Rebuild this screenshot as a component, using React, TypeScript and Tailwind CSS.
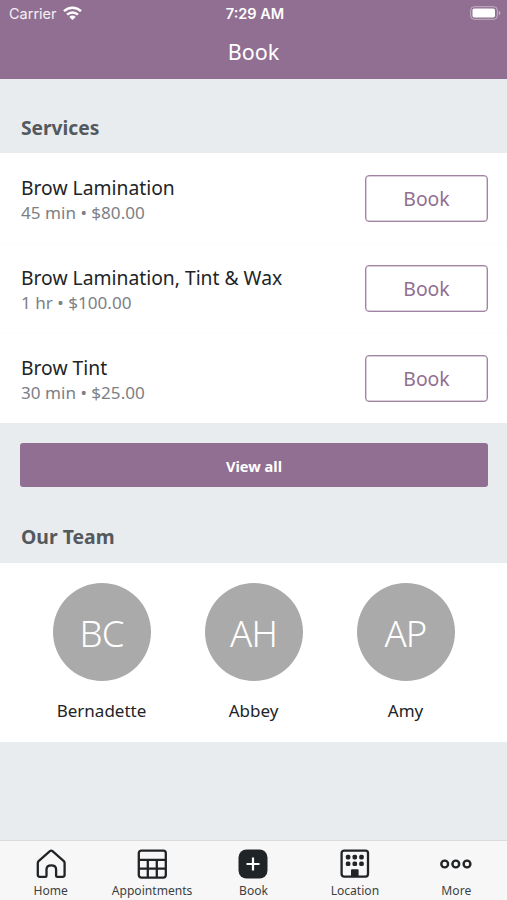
import type { ReactNode } from "react";

const services = [
  { name: "Brow Lamination", duration: "45 min", price: "$80.00" },
  { name: "Brow Lamination, Tint & Wax", duration: "1 hr", price: "$100.00" },
  { name: "Brow Tint", duration: "30 min", price: "$25.00" },
];

const team = [
  { name: "Bernadette", initials: "BC" },
  { name: "Abbey", initials: "AH" },
  { name: "Amy", initials: "AP" },
];

function HomeIcon() {
  return (
    <svg width="32" height="32" viewBox="0 0 32 32" fill="none" stroke="#212427" strokeWidth="2.3" strokeLinejoin="round" strokeLinecap="round">
      <path d="M2.8 15c0-.8.3-1.4.8-1.9L14.9 3.2c.8-.7 1.8-.7 2.6 0l11.3 9.9c.5.5.8 1.1.8 1.9v11.8c0 1.2-.8 2-2 2h-5.4c-.7 0-1.1-.4-1.1-1.1v-6.2c0-2.5-1.9-4.2-4.8-4.2s-4.8 1.7-4.8 4.2v6.2c0 .7-.4 1.1-1.1 1.1H4.8c-1.2 0-2-.8-2-2z" />
    </svg>
  );
}

function CalendarIcon() {
  return (
    <svg width="32" height="32" viewBox="0 0 32 32" fill="none" stroke="#212427" strokeWidth="2.3">
      <rect x="2.8" y="2.6" width="27" height="27" rx="2.5" />
      <path d="M2.8 11.9h27M2.8 20.6h27M11.8 11.9v17.7M20.8 11.9v17.7" />
    </svg>
  );
}

function BookIcon() {
  return (
    <svg width="32" height="32" viewBox="0 0 32 32">
      <rect x="1.5" y="1.5" width="29" height="29" rx="8" fill="#212427" />
      <path d="M16 9.5v13M9.5 16h13" stroke="#fff" strokeWidth="2.2" />
    </svg>
  );
}

function LocationIcon() {
  return (
    <svg width="32" height="32" viewBox="0 0 32 32">
      <rect x="2.6" y="2.6" width="26.4" height="26" rx="2.5" fill="none" stroke="#212427" strokeWidth="2.3" />
      <g fill="#212427">
        {[6.8, 13.5, 20.2].map((x) => (
          <g key={x}>
            <rect x={x} y="6.8" width="4.6" height="4.6" rx="1.6" />
            <rect x={x} y="13.4" width="4.6" height="4.6" rx="1.6" />
          </g>
        ))}
        <path d="M12 29v-6.5c0-.8.5-1.3 1.3-1.3h5c.8 0 1.3.5 1.3 1.3V29z" />
      </g>
    </svg>
  );
}

function MoreIcon() {
  return (
    <svg width="32" height="32" viewBox="0 0 32 32" fill="none" stroke="#212427" strokeWidth="2.4">
      <circle cx="4.7" cy="16" r="3.4" />
      <circle cx="15.8" cy="16" r="3.4" />
      <circle cx="27" cy="16" r="3.4" />
    </svg>
  );
}

const tabs: { label: string; icon: ReactNode }[] = [
  { label: "Home", icon: <HomeIcon /> },
  { label: "Appointments", icon: <CalendarIcon /> },
  { label: "Book", icon: <BookIcon /> },
  { label: "Location", icon: <LocationIcon /> },
  { label: "More", icon: <MoreIcon /> },
];

function StatusBar() {
  return (
    <div className="grid h-7 grid-cols-3 items-center pr-1.5 pl-[9px] font-['Inter',sans-serif] text-[14.5px] text-white">
      <div className="flex items-center gap-1.5 text-white/90">
        <span>Carrier</span>
        <svg className="-mt-0.5" width="19" height="14" viewBox="0 0 19 14" fill="none" stroke="#fff" strokeWidth="2.5">
          <path d="M1 5.2a12.2 12.2 0 0 1 17 0M4.1 8.6a7.8 7.8 0 0 1 10.8 0" />
          <path d="M9.5 14 6.3 10.9a4.6 4.6 0 0 1 6.4 0z" fill="#fff" stroke="none" />
        </svg>
      </div>
      <div className="text-center font-semibold">7:29 AM</div>
      <svg className="-mt-0.5 justify-self-end" width="31" height="14" viewBox="0 0 31 14">
        <rect x="0.7" y="0.7" width="26.6" height="12.6" rx="3.5" fill="none" stroke="#fff" strokeOpacity="0.45" />
        <rect x="2.5" y="2.5" width="22.5" height="9" rx="1.8" fill="#fff" />
        <path d="M28.8 5v4c.9-.3 1.5-1.1 1.5-2s-.6-1.7-1.5-2z" fill="#fff" fillOpacity="0.5" />
      </svg>
    </div>
  );
}

export default function App() {
  return (
    <div className="flex h-[900px] w-[507px] flex-col overflow-hidden bg-[#e8ecef] font-['Noto_Sans',sans-serif] text-[#212427]">
      {/* Header */}
      <header className="h-[79px] shrink-0 bg-[#916f92]">
        <StatusBar />
        <h1 className="pt-1.5 text-center text-[21.5px] leading-9 text-white">Book</h1>
      </header>

      <main className="flex-1">
        {/* Services */}
        <h2 className="flex h-[74px] items-end px-[21px] pb-[11px] text-[19.2px] leading-7 font-bold text-[#54595e]">Services</h2>
        <ul className="bg-white pt-px">
          {services.map((s) => (
            <li key={s.name} className="flex h-[90px] items-center justify-between border-b border-[#fcfcfc] pr-[19px] pl-[21px] last:h-[89px] last:border-0">
              <div className="pt-[5px]">
                <div className="text-[19.3px] leading-6">{s.name}</div>
                <div className="text-[17.1px] leading-[26px] text-[#7c8085]">
                  {s.duration} • {s.price}
                </div>
              </div>
              <button className="h-[47px] w-[123px] rounded border border-[#a084a1] pt-px text-[19.4px] text-[#916f92] shadow-[inset_0_0_0_0.5px_#b59fb6]">
                Book
              </button>
            </li>
          ))}
        </ul>
        <div className="pt-5 pr-[19px] pl-5">
          <button className="block h-11 w-full rounded-[3px] bg-[#916f92] pt-[3px] text-[14.6px] font-bold text-white">View all</button>
        </div>

        {/* Team */}
        <h2 className="flex h-[76px] items-end px-[21px] pb-3 text-[19.4px] leading-7 font-bold text-[#54595e]">Our Team</h2>
        <ul className="flex h-[179px] justify-center gap-[54px] bg-white pt-5">
          {team.map((m) => (
            <li key={m.name} className="flex w-[98px] flex-col items-center">
              <div className="flex size-[98px] items-center justify-center rounded-full bg-[#aaaaaa] pt-0.5 text-[36.5px] font-light tracking-[-0.8px] text-white">
                {m.initials}
              </div>
              <div className="mt-[18px] text-[17px] leading-6">{m.name}</div>
            </li>
          ))}
        </ul>
      </main>

      {/* Tab bar */}
      <nav className="grid h-[60px] shrink-0 grid-cols-5 border-t border-[#d9dadc] bg-[#f7f7f7]">
        {tabs.map((t) => (
          <a key={t.label} className="flex flex-col items-center pt-[7px]">
            {t.icon}
            <span className="mt-0.5 text-[12.1px] leading-[18px] text-[#3c3f42]">{t.label}</span>
          </a>
        ))}
      </nav>
    </div>
  );
}
